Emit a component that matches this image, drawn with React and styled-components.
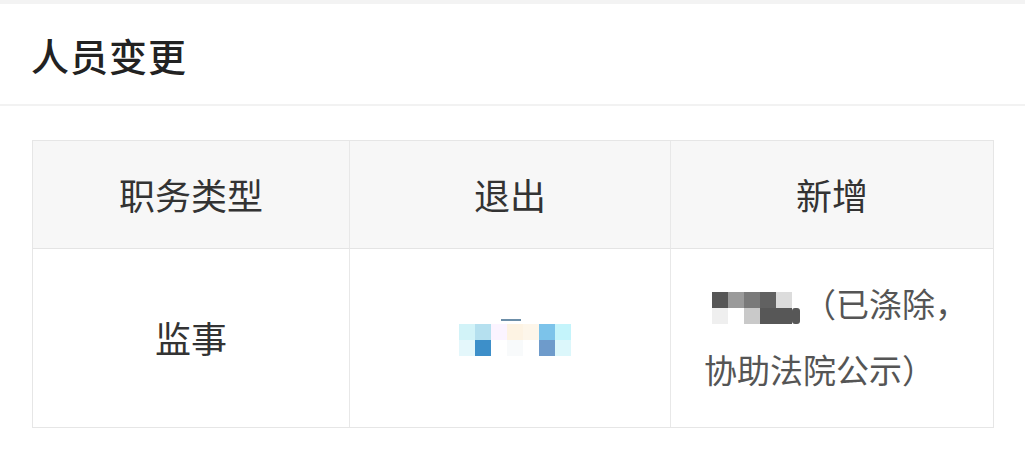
import React from "react";
import styled, { createGlobalStyle } from "styled-components";

const GlobalStyle = createGlobalStyle`
  html, body {
    margin: 0;
    padding: 0;
    background: #fff;
    font-family: "Noto Sans CJK SC", "Noto Sans", sans-serif;
  }
`;

const Page = styled.div`
  width: 1025px;
  height: 457px;
  background: #fff;
  border-top: 4px solid #f3f3f3;
  box-sizing: border-box;
`;

const Header = styled.div`
  height: 102px;
  display: flex;
  align-items: center;
  padding-left: 31px;
  border-bottom: 2px solid #f2f2f2;
  box-sizing: border-box;
`;

const Title = styled.h2`
  margin: 0;
  font-size: 38px;
  font-weight: 500;
  color: #222;
  letter-spacing: 1px;
`;

const Table = styled.div`
  margin: 34px 0 0 32px;
  width: 962px;
  display: grid;
  grid-template-columns: 317px 321px 322px;
  border: 1px solid #e6e6e6;
  box-sizing: border-box;
`;

const Cell = styled.div`
  display: flex;
  align-items: center;
  justify-content: ${(p) => (p.$left ? "flex-start" : "center")};
  height: ${(p) => (p.$head ? "108px" : "178px")};
  padding: ${(p) => (p.$left ? "0 16px 0 33px" : "0")};
  box-sizing: border-box;
  background: ${(p) => (p.$head ? "#f7f7f7" : "#fff")};
  border-right: ${(p) => (p.$last ? "none" : "1px solid #e8e8e8")};
  border-bottom: ${(p) => (p.$head ? "1px solid #e4e4e4" : "none")};
  font-size: ${(p) => (p.$left ? "33px" : "36px")};
  line-height: ${(p) => (p.$left ? "66px" : "1.2")};
  color: ${(p) => (p.$left ? "#555" : "#333")};
`;

const Para = styled.div`
  margin-top: -4px;
`;

const Mosaic = styled.svg`
  display: inline-block;
  vertical-align: middle;
`;

const nameBlocks = [
  [0, 0, "#565656"], [16, 0, "#9a9a9a"], [32, 0, "#7a7a7a"], [48, 0, "#616161"], [64, 0, "#dcdcdc"],
  [0, 16, "#efefef"], [32, 16, "#c9c9c9"], [48, 16, "#575757"], [64, 16, "#575757"],
];

const leaveBlocks = [
  [0, 8, "#d2f3f8"], [16, 8, "#b5e0ef"], [16, 24, "#3d8fc9"], [0, 24, "#e4f7fb"],
  [32, 8, "#fbf4ff"], [48, 8, "#fdf3e3"], [64, 8, "#fdf6ea"], [48, 24, "#f8fafb"],
  [80, 8, "#7cc3ea"], [80, 24, "#6e9bcb"], [96, 8, "#c4f4fb"], [96, 24, "#dcf7fb"],
];

const NameMosaic = () => (
  <Mosaic width="99" height="32" viewBox="0 0 99 32">
    {nameBlocks.map(([x, y, c], i) => (
      <rect key={i} x={x + 8} y={y} width="16" height="16" fill={c} />
    ))}
    <rect x="88" y="16" width="8" height="16" rx="3" fill="#575757" />
  </Mosaic>
);

const LeaveMosaic = () => (
  <Mosaic width="112" height="44" viewBox="0 0 112 44" style={{ marginLeft: 10 }}>
    {leaveBlocks.map(([x, y, c], i) => (
      <rect key={i} x={x} y={y} width="16" height="16" fill={c} />
    ))}
    <rect x="42" y="3" width="20" height="2" fill="#6c8ea8" />
  </Mosaic>
);

export default function App() {
  return (
    <>
      <GlobalStyle />
      <Page>
        <Header>
          <Title>人员变更</Title>
        </Header>
        <Table>
          <Cell $head>职务类型</Cell>
          <Cell $head>退出</Cell>
          <Cell $head $last>新增</Cell>
          <Cell>监事</Cell>
          <Cell>
            <LeaveMosaic />
          </Cell>
          <Cell $left $last>
            <Para>
              <NameMosaic />（已涤除，协助法院公示）
            </Para>
          </Cell>
        </Table>
      </Page>
    </>
  );
}
